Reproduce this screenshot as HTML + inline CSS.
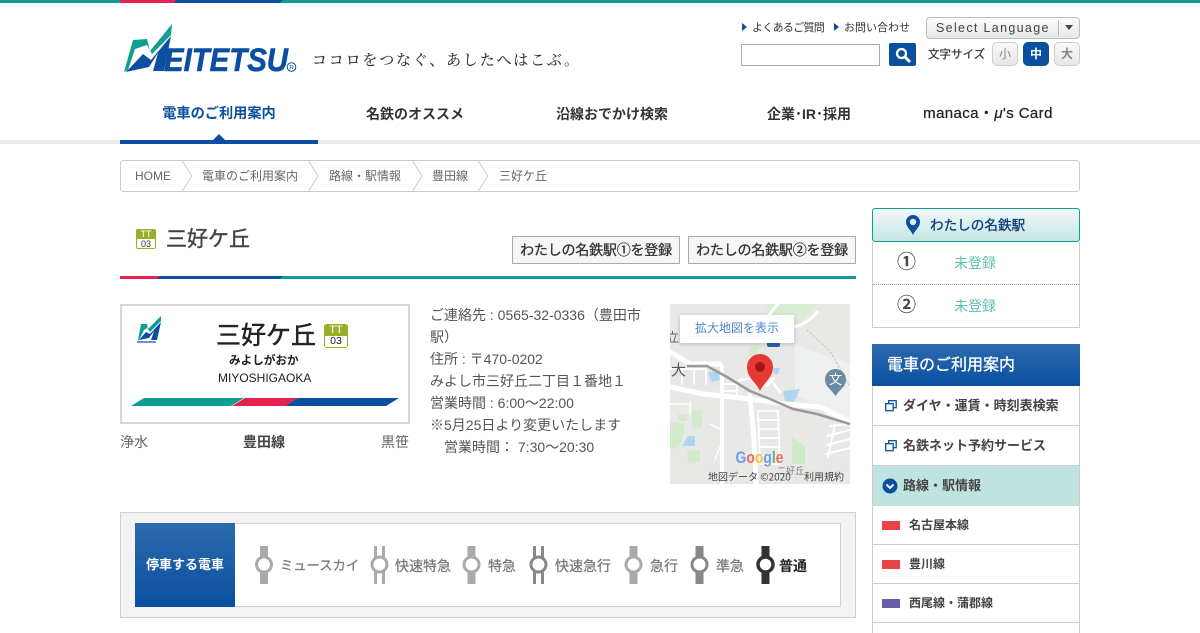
<!DOCTYPE html>
<html lang="ja"><head><meta charset="utf-8"><title>三好ケ丘</title>
<style>
*{box-sizing:border-box}
html,body{margin:0;padding:0;background:#fff}
body{width:1200px;height:630px;overflow:hidden;position:relative;font-family:"Liberation Sans","Noto Sans CJK JP",sans-serif;color:#333}
.a{position:absolute;white-space:nowrap}
.nav{top:104px;font-size:14px;font-weight:bold;line-height:20px;color:#333;text-align:center}
.bc{top:168px;font-size:12px;line-height:16px;color:#666}
.info{left:430px;width:220px;font-size:14px;line-height:22px;color:#555;white-space:nowrap}
.stop{top:557px;font-size:14px;line-height:18px;color:#777;-webkit-text-stroke:.25px #777}
.side{left:872px;width:208px;border:1px solid #ccc;border-top:0;background:#fff}
.sb{font-size:13px;font-weight:bold;color:#444;line-height:18px}
.sl{font-size:12px;font-weight:bold;color:#444;line-height:16px}
.reg{top:236px;width:168px;height:28px;border:1px solid #aaa;background:#f6f6f6;font-size:14px;line-height:26px;text-align:center;color:#333;letter-spacing:-.2px;-webkit-text-stroke:.3px #333}
</style></head><body>

<div class="a" style="left:0;top:0;width:1200px;height:3px;background:#0f9f92"></div>
<svg class="a" style="left:120px;top:0" width="165" height="3"><polygon points="0,0 56,0 54,3 0,3" fill="#e3224f"/><polygon points="56,0 163,0 160,3 54,3" fill="#0a4fa0"/></svg>

<svg class="a" style="left:120px;top:20px" width="182" height="56" viewBox="0 0 182 56">
<polygon points="4,52 13,20 27,19 30,31 52,4 51,15 32,34 27,25 15,29 8,50" fill="#0f9f92"/>
<polygon points="6,52 23,34 31,40 51,16 44,51 33,51 38,33 29,47" fill="#0a4fa0"/>
<text x="44" y="51" font-family="Liberation Sans" font-size="32" font-weight="bold" font-style="italic" fill="#0a4fa0" stroke="#0a4fa0" stroke-width=".6" textLength="124" lengthAdjust="spacingAndGlyphs">EITETSU</text>
<circle cx="171.500" cy="47" r="4.300" fill="none" stroke="#0a4fa0"/>
<text x="169.300" y="49.500" font-family="Liberation Sans" font-size="6.500" fill="#0a4fa0">R</text>
</svg>
<div class="a" style="left:312px;top:50px;font-size:15px;line-height:20px;letter-spacing:1.800px;color:#333;font-family:'Noto Serif CJK SC','Liberation Serif',serif;font-weight:500">ココロをつなぐ、あしたへはこぶ。</div>

<svg class="a" style="left:742px;top:23px" width="6" height="8"><polygon points="0,0 5,4 0,8" fill="#0a4fa0"/></svg>
<div class="a" style="left:752px;top:20px;font-size:11px;line-height:17px;color:#333;letter-spacing:-.7px">よくあるご質問</div>
<svg class="a" style="left:834px;top:23px" width="6" height="8"><polygon points="0,0 5,4 0,8" fill="#0a4fa0"/></svg>
<div class="a" style="left:844px;top:20px;font-size:11px;line-height:17px;color:#333">お問い合わせ</div>

<div class="a" style="left:926px;top:17px;width:154px;height:22px;border:1px solid #bbb;border-radius:4px;background:linear-gradient(#fafbfb,#e4eaea)"></div>
<div class="a" style="left:936px;top:20px;font-size:12.500px;line-height:16px;letter-spacing:1.330px;color:#444">Select Language</div>
<div class="a" style="left:1058px;top:20px;width:1px;height:16px;background:#bbb"></div>
<svg class="a" style="left:1065px;top:25px" width="9" height="6"><polygon points="0,0 8,0 4,5" fill="#444"/></svg>

<div class="a" style="left:741px;top:44px;width:139px;height:22px;border:1px solid #aaa;background:#fff"></div>
<div class="a" style="left:889px;top:43px;width:27px;height:23px;background:#0a4fa0;border-radius:2px"></div>
<svg class="a" style="left:889px;top:43px" width="27" height="23"><circle cx="12.500" cy="10.500" r="4.500" fill="none" stroke="#fff" stroke-width="2.300"/><line x1="16" y1="14" x2="21" y2="19" stroke="#fff" stroke-width="3"/></svg>

<div class="a" style="left:928px;top:46px;font-size:11.500px;line-height:18px;color:#333;-webkit-text-stroke:.2px #333">文字サイズ</div>
<div class="a" style="left:992px;top:42px;width:26px;height:24px;border:1px solid #ccc;border-radius:5px;background:linear-gradient(#fafafa,#e6e6e6);font-size:12px;line-height:22px;text-align:center;color:#888">小</div>
<div class="a" style="left:1023px;top:42px;width:26px;height:24px;border-radius:5px;background:#0a4fa0;font-size:12px;font-weight:bold;line-height:24px;text-align:center;color:#fff">中</div>
<div class="a" style="left:1054px;top:42px;width:26px;height:24px;border:1px solid #ccc;border-radius:5px;background:linear-gradient(#fafafa,#e6e6e6);font-size:12px;font-weight:bold;line-height:22px;text-align:center;color:#888">大</div>

<div class="a nav" style="left:120px;width:198px;font-size:14.200px;color:#0a4fa0">電車のご利用案内</div>
<div class="a nav" style="left:316px;width:198px">名鉄のオススメ</div>
<div class="a nav" style="left:513px;width:198px">沿線おでかけ検索</div>
<div class="a nav" style="left:710px;width:198px">企業･IR･採用</div>
<div class="a nav" style="left:889px;width:198px;font-weight:normal;font-size:15px;letter-spacing:.4px;color:#222;-webkit-text-stroke:.25px #222">manaca・<i>μ</i>'s Card</div>

<div class="a" style="left:0;top:140px;width:1200px;height:4px;background:#ebebeb"></div>
<div class="a" style="left:120px;top:140px;width:198px;height:4px;background:#0a4fa0"></div>
<svg class="a" style="left:213px;top:134px" width="12" height="6"><polygon points="6,0 12,6 0,6" fill="#0a4fa0"/></svg>

<div class="a" style="left:120px;top:160px;width:960px;height:32px;border:1px solid #ccc;border-radius:3px;background:#fff"></div>
<svg class="a" style="left:120px;top:160px" width="400" height="32"><g fill="none" stroke="#ccc"><path d="M62.500 1L72 16L62.500 31"/><path d="M188.500 1L198 16L188.500 31"/><path d="M292.500 1L302 16L292.500 31"/><path d="M358.500 1L368 16L358.500 31"/></g></svg>
<div class="a bc" style="left:135px">HOME</div>
<div class="a bc" style="left:202px">電車のご利用案内</div>
<div class="a bc" style="left:329px">路線・駅情報</div>
<div class="a bc" style="left:432px">豊田線</div>
<div class="a bc" style="left:499px">三好ケ丘</div>

<div class="a" style="left:136px;top:229px;width:20px;height:20px;border:1px solid #9aae2a;border-radius:2px;background:#fff"></div>
<div class="a" style="left:136px;top:229px;width:20px;height:10px;background:#9aae2a;border-radius:2px 2px 0 0;color:#fff;font-size:9px;line-height:11px;text-align:center">TT</div>
<div class="a" style="left:136px;top:239px;width:20px;font-size:9px;line-height:10px;text-align:center;color:#333">03</div>
<div class="a" style="left:166px;top:226px;font-size:21px;line-height:28px;color:#444;-webkit-text-stroke:.4px #444">三好ケ丘</div>

<div class="a reg" style="left:512px">わたしの名鉄駅①を登録</div>
<div class="a reg" style="left:688px">わたしの名鉄駅②を登録</div>

<div class="a" style="left:120px;top:276px;width:736px;height:3px;background:#0f9f92"></div>
<svg class="a" style="left:120px;top:276px" width="165" height="3"><polygon points="0,0 40,0 37,3 0,3" fill="#e3224f"/><polygon points="40,0 163,0 160,3 37,3" fill="#0a4fa0"/></svg>

<div class="a" style="left:120px;top:304px;width:290px;height:120px;border:2px solid #d8d8d8;background:#fff"></div>
<svg class="a" style="left:136px;top:314px" width="28" height="32" viewBox="0 0 28 32">
<polygon points="2,26 5,10 11,10 12,15 25,2 25,7 14,18 11,14 8,16 3,26" fill="#0f9f92"/>
<polygon points="3,26 10,18 14,20 25,8 21,26 15,26 18,17 13,24" fill="#0a4fa0"/>
<rect x="1" y="27" width="19" height="2" fill="#0a4fa0" opacity=".6"/>
</svg>
<div class="a" style="left:216px;top:318px;font-size:25px;line-height:36px;color:#222;-webkit-text-stroke:.5px #222">三好ケ丘</div>
<div class="a" style="left:324px;top:324px;width:24px;height:24px;border:1.500px solid #9aae2a;border-radius:3px;background:#fff"></div>
<div class="a" style="left:324px;top:324px;width:24px;height:12px;background:#9aae2a;border-radius:3px 3px 0 0;color:#fff;font-size:11px;line-height:13px;text-align:center">TT</div>
<div class="a" style="left:324px;top:336px;width:24px;font-size:10.500px;line-height:11px;text-align:center;color:#222">03</div>
<div class="a" style="left:229px;top:353px;font-size:11.600px;font-weight:bold;line-height:16px;color:#222">みよしがおか</div>
<div class="a" style="left:218px;top:370px;font-size:12px;line-height:16px;color:#222">MIYOSHIGAOKA</div>
<svg class="a" style="left:130px;top:398px" width="272" height="9">
<polygon points="1,8 14,0 114,0 101,8" fill="#0f9f92"/>
<polygon points="102,8 115,0 168,0 155,8" fill="#e3224f"/>
<polygon points="155,8 168,0 269,0 256,8" fill="#0a4fa0"/>
</svg>
<div class="a" style="left:120px;top:432px;font-size:14px;line-height:20px;color:#666">浄水</div>
<div class="a" style="left:243px;top:432px;font-size:14px;line-height:20px;font-weight:bold;color:#444">豊田線</div>
<div class="a" style="left:381px;top:432px;font-size:14px;line-height:20px;color:#666">黒笹</div>

<div class="a info" style="top:304px">ご連絡先 : 0565-32-0336（豊田市<br>駅）<br>住所 : 〒470-0202<br>みよし市三好丘二丁目１番地１<br>営業時間 : 6:00～22:00<br>※5月25日より変更いたします<br>　営業時間： 7:30～20:30</div>

<svg class="a" style="left:670px;top:304px" width="180" height="180" viewBox="0 0 180 180">
<rect width="180" height="180" fill="#e8e8e6"/>
<path d="M0 63H50V85L0 83Z" fill="#e6e6e4"/>
<path d="M125 40L180 60V118L150 103L125 90Z" fill="#eef0f0"/>
<path d="M93 0H147L130 20H105L100 12Z" fill="#d8eed2"/>
<path d="M0 117L15 120L10 142L0 146Z" fill="#d3ebcc"/>
<path d="M22 107L32 105V125L22 124Z" fill="#d3ebcc"/>
<path d="M8 110L17 110V117L8 117Z" fill="#d3ebcc"/>
<path d="M17 147L30 145V158L18 160Z" fill="#d3ebcc"/>
<path d="M122 132L135 143V160L122 160Z" fill="#cfe8c8"/>
<path d="M80 43L92 42L84 52L78 51Z" fill="#d3ebcc"/>
<path d="M12 142L18 132H25V142Z" fill="#aed6f1"/>
<path d="M38 68H48L50 76L42 78Z" fill="#aed6f1"/>
<path d="M113 87L130 85L124 98L115 97Z" fill="#aed6f1"/>
<path d="M103 64H110L108 70H104Z" fill="#aed6f1"/>
<g fill="none" stroke="#fff" stroke-linecap="round">
<path d="M0 48L20 60H50" stroke-width="5"/>
<path d="M0 83L33 90L80 95L115 100L150 103L180 118" stroke-width="5"/>
<path d="M52 63V180" stroke-width="4"/>
<path d="M80 92L84 135L86 180" stroke-width="5"/>
<path d="M147 8C138 20 125 25 108 24" stroke-width="3"/>
<path d="M108 0L98 12" stroke-width="3"/>
<path d="M0 65H36V80M12 65V80M24 65V80" stroke-width="2"/>
<path d="M55 80H67V93H55M55 87H67" stroke-width="2"/>
<path d="M70 76L98 72L110 88M97 82L104 74" stroke-width="2.500"/>
<path d="M88 107H108L110 160H90ZM88 116H109M89 125H109M89 134H110M90 143H110M90 152H110" stroke-width="1.800"/>
<path d="M160 122L180 120M157 132L180 126M157 141L180 135M156 150L180 144M165 120L158 153" stroke-width="2"/>
<path d="M40 120L50 125M45 155L52 138M20 98V110M0 100H18" stroke-width="1.500"/>
</g>
<path d="M17 62H37L57 73L80 87L100 95L123 105L147 110L180 120" fill="none" stroke="#999" stroke-width="2.500" stroke-linejoin="round"/>
<path d="M137 26L160 47L180 83" fill="none" stroke="#c9b9a8" stroke-width="1" stroke-dasharray="2 2"/>
<rect x="97" y="34" width="13" height="9" rx="2" fill="#2a60b0"/>
<text x="-4" y="38" font-size="13" fill="#666" font-family="Noto Sans CJK JP">立馬</text>
<rect x="10" y="11" width="114" height="28" fill="#fff" style="filter:drop-shadow(0 1px 2px rgba(0,0,0,.2))"/>
<path d="M165.500 65A10.500 10.500 0 0 1 176 75.500C176 83 170 85 165.500 92C161 85 155 83 155 75.500A10.500 10.500 0 0 1 165.500 65Z" fill="#6c8aa0"/>
<text x="165.500" y="80" font-size="13" text-anchor="middle" fill="#fff" font-family="Noto Sans CJK JP">文</text>
<path d="M90 50A13 13 0 0 1 103 63C103 74 94 78 90 87C86 78 77 74 77 63A13 13 0 0 1 90 50Z" fill="#e53935"/>
<circle cx="90" cy="63" r="5" fill="#a31510"/>
<text x="65.500" y="159" font-family="Liberation Sans" font-size="16.500" font-weight="bold" textLength="48" lengthAdjust="spacingAndGlyphs"><tspan fill="#6d9ef0">G</tspan><tspan fill="#ea6a5e">o</tspan><tspan fill="#f7c531">o</tspan><tspan fill="#6d9ef0">g</tspan><tspan fill="#5cb870">l</tspan><tspan fill="#ea6a5e">e</tspan></text>
<text x="107" y="170" font-size="9" fill="#777" font-family="Noto Sans CJK JP">二好丘</text>
<text x="38" y="176.500" font-size="10" fill="#444" font-family="Noto Sans CJK JP">地図データ ©2020</text>
<text x="134" y="176.500" font-size="10" fill="#444" font-family="Noto Sans CJK JP">利用規約</text>
<text x="1" y="71" font-size="15" fill="#555" font-family="Noto Sans CJK JP">大</text>
</svg>
<div class="a" style="left:680px;top:319px;width:114px;font-size:12px;line-height:18px;text-align:center;color:#4a86cf">拡大地図を表示</div>

<div class="a" style="left:120px;top:512px;width:736px;height:106px;border:1px solid #d0d0d0;background:#f3f3f3"></div>
<div class="a" style="left:135px;top:523px;width:706px;height:84px;border:1px solid #d0d0d0;background:#fff"></div>
<div class="a" style="left:135px;top:523px;width:100px;height:84px;background:linear-gradient(#2c6aad,#0a4fa0);color:#fff;font-size:13px;font-weight:bold;line-height:84px;text-align:center">停車する電車</div>

<svg class="a" style="left:250px;top:540px" width="530" height="50" fill="none">
<g stroke="#aaa"><rect x="10" y="6" width="8" height="38" fill="#aaa" stroke="none"/><circle cx="14" cy="24.500" r="7.500" fill="#fff" stroke-width="3"/></g>
<g stroke="#aaa"><rect x="124" y="6" width="3" height="38" fill="#aaa" stroke="none"/><rect x="132" y="6" width="3" height="38" fill="#aaa" stroke="none"/><circle cx="129.500" cy="24.500" r="7.500" fill="#fff" stroke-width="3"/></g>
<g stroke="#aaa"><rect x="217.500" y="6" width="8" height="38" fill="#aaa" stroke="none"/><circle cx="221.500" cy="24.500" r="7.500" fill="#fff" stroke-width="3"/></g>
<g stroke="#888"><rect x="283" y="6" width="3" height="38" fill="#888" stroke="none"/><rect x="291" y="6" width="3" height="38" fill="#888" stroke="none"/><circle cx="288.500" cy="24.500" r="7.500" fill="#fff" stroke-width="3"/></g>
<g stroke="#aaa"><rect x="379.500" y="6" width="8" height="38" fill="#aaa" stroke="none"/><circle cx="383.500" cy="24.500" r="7.500" fill="#fff" stroke-width="3"/></g>
<g stroke="#888"><rect x="445.500" y="6" width="8" height="38" fill="#888" stroke="none"/><circle cx="449.500" cy="24.500" r="7.500" fill="#fff" stroke-width="3"/></g>
<g stroke="#333"><rect x="511.500" y="6" width="8" height="38" fill="#333" stroke="none"/><circle cx="515.500" cy="24.500" r="7.500" fill="#fff" stroke-width="3.500"/></g>
</svg>
<div class="a stop" style="left:280px;font-size:13.300px">ミュースカイ</div>
<div class="a stop" style="left:395px">快速特急</div>
<div class="a stop" style="left:488px">特急</div>
<div class="a stop" style="left:555px">快速急行</div>
<div class="a stop" style="left:650px">急行</div>
<div class="a stop" style="left:716px">準急</div>
<div class="a stop" style="left:779px;color:#222;font-weight:bold;-webkit-text-stroke:0">普通</div>

<div class="a" style="left:872px;top:208px;width:208px;height:34px;border:1px solid #0f9f92;border-radius:3px;background:linear-gradient(#f2f9f9,#c3e6e3)"></div>
<svg class="a" style="left:905px;top:215px" width="16" height="20"><path d="M8 0A7 7 0 0 1 15 7C15 12 10 15 8 20C6 15 1 12 1 7A7 7 0 0 1 8 0Z" fill="#0a4fa0"/><circle cx="8" cy="7" r="3.200" fill="#d8f0ee"/></svg>
<div class="a" style="left:930px;top:216px;font-size:13.600px;line-height:20px;color:#0d3a7a;-webkit-text-stroke:.3px #0d3a7a">わたしの名鉄駅</div>
<div class="a side" style="top:242px;height:86px"></div>
<div class="a" style="left:873px;top:284px;width:206px;border-top:1px dotted #999"></div>
<div class="a" style="left:897px;top:252px;font-size:19px;font-weight:bold;line-height:22px;color:#444">①</div>
<div class="a" style="left:897px;top:295px;font-size:19px;font-weight:bold;line-height:22px;color:#444">②</div>
<div class="a" style="left:954px;top:253px;font-size:14px;line-height:20px;color:#5cc0b0">未登録</div>
<div class="a" style="left:954px;top:296px;font-size:14px;line-height:20px;color:#5cc0b0">未登録</div>

<div class="a" style="left:872px;top:344px;width:208px;height:42px;background:linear-gradient(#2c6aad,#0a4fa0);color:#fff;font-size:16px;line-height:43px;padding-left:15px;-webkit-text-stroke:.3px #fff">電車のご利用案内</div>
<div class="a side" style="top:386px;height:40px;border-bottom:1px solid #ccc"></div>
<div class="a side" style="top:426px;height:40px;border-bottom:1px solid #ccc"></div>
<div class="a side" style="top:466px;height:40px;background:#bfe3df;border-bottom:0"></div>
<div class="a side" style="top:506px;height:39px;border-bottom:1px solid #ccc"></div>
<div class="a side" style="top:545px;height:39px;border-bottom:1px solid #ccc"></div>
<div class="a side" style="top:584px;height:39px;border-bottom:1px solid #ccc"></div>
<div class="a side" style="top:623px;height:10px;border-bottom:0"></div>

<svg class="a" style="left:885px;top:400px" width="12" height="12" fill="none" stroke="#0a4fa0" stroke-width="1.300"><rect x="3.700" y=".7" width="7.500" height="7"/><rect x=".7" y="3.700" width="7.500" height="7" fill="#fff"/></svg>
<svg class="a" style="left:885px;top:440px" width="12" height="12" fill="none" stroke="#0a4fa0" stroke-width="1.300"><rect x="3.700" y=".7" width="7.500" height="7"/><rect x=".7" y="3.700" width="7.500" height="7" fill="#fff"/></svg>
<svg class="a" style="left:882px;top:478px" width="16" height="16"><circle cx="8" cy="8" r="7.500" fill="#0a4fa0"/><path d="M4.500 6.500L8 10L11.500 6.500" fill="none" stroke="#fff" stroke-width="2"/></svg>

<div class="a sb" style="left:903px;top:397px">ダイヤ・運賃・時刻表検索</div>
<div class="a sb" style="left:903px;top:437px">名鉄ネット予約サービス</div>
<div class="a sb" style="left:903px;top:477px">路線・駅情報</div>

<div class="a" style="left:882px;top:521px;width:18px;height:9px;background:#e94444"></div>
<div class="a" style="left:882px;top:560px;width:18px;height:9px;background:#e94444"></div>
<div class="a" style="left:882px;top:599px;width:18px;height:9px;background:#6a5ca8"></div>
<div class="a sl" style="left:909px;top:517px">名古屋本線</div>
<div class="a sl" style="left:909px;top:556px">豊川線</div>
<div class="a sl" style="left:909px;top:595px">西尾線・蒲郡線</div>

</body></html>
